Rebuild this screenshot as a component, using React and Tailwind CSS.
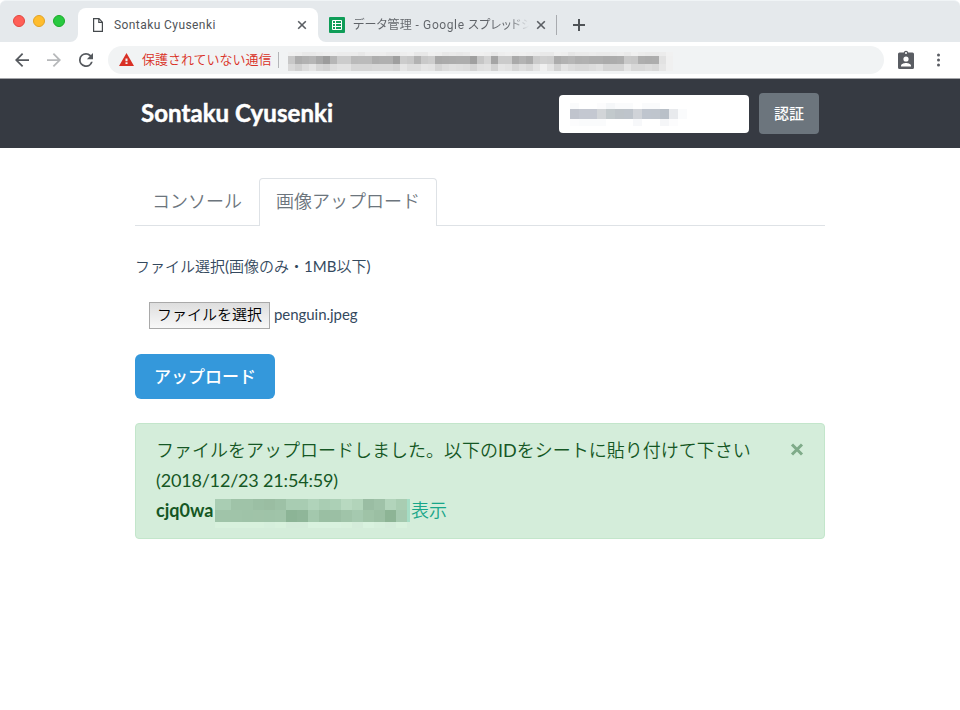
import { useState } from 'react';

const URL_ROWS = [
  {
    y: 0,
    h: 4,
    cells: 'f0 ee e9 e9 ec ee ee ec ec ec e8 ee ee ee ea ea ee f0 e8 e8 f0 ee e8 ea e8 ea f0 f0 ee e8 ee f0 ee f0 ee ec e9 e9 f0 ee e6 ea ea ec ea ea ec ee ea f0 ec ea ea ec f1',
  },
  {
    y: 4,
    h: 8,
    cells: 'c8 ad b2 b6 a9 9c b6 cc cc ba bb bb ae b0 b0 9f cc c8 b2 c9 cd a9 ab ac ad ad a0 c6 d4 a5 cb cb aa b3 ab cb d0 ce ac b2 b6 b0 b1 ae ae ab ac ae c9 c7 ae ac ad e2 f0',
  },
  {
    y: 12,
    h: 7,
    cells: 'd9 d0 dc e4 d6 d2 dd e2 e2 d6 d6 d6 d8 d8 d8 d4 e5 dd dd e5 e3 d4 dc e0 de dc d4 e0 e2 d2 e5 e2 d6 de d8 e4 f0 e4 d2 e3 dc d8 d8 dc e0 d4 d4 d4 e4 d8 d8 dc d8 e6 f0',
  },
];

const INPUT_ROWS = [
  { y: 0, h: 6, cells: 'fafbfc ffffff ffffff fcfcfd f5f7f9 fafbfc fafbfc ffffff fafbfc fafbfc ffffff ffffff ffffff' },
  { y: 6, h: 10, cells: 'c0c4cd c4c8d1 c4c8d1 d2d5d8 c2c9cc bec4c9 bec4cb d0d3d8 bfc5ce bfc5cd b9c0c8 e8eaed fafbfc' },
  { y: 16, h: 7, cells: 'fcfcfd fafbfc fafbfc fafbfc ffffff ffffff ffffff f7f8fa ffffff ffffff f5f6f8 fcfcfd ffffff' },
];

const ID_ROWS = [
  {
    y: 0,
    h: 11.3,
    cells: 'a9cdb3 a9cdb3 9fc3a8 9fc3a8 9bbfa4 9abda2 9dc1a6 a8ccb2 a8ccb2 b0d3ba a9cdb3 acd0b6 b8d9c0 b2d4ba 9abda3 9fc2a8 b2d4bb a9cdb2 a5ddc5',
  },
  {
    y: 11.3,
    h: 11.4,
    cells: '9fc4a9 a0c4a9 a0c4a9 9fc3a8 a0c3a8 9fc3a8 a0c4a9 8cb496 8fb699 a3c8ad 9abfa3 9bbfa4 a0c4a9 a5c9af 9fc3a7 9bbfa3 8db495 a5c9af a5ddc5',
  },
  {
    y: 22.7,
    h: 6,
    cells: 'd8f1dd d8f1dd d8f1dd d8f1dd d8f1dd d6efdc d8f1dd d4ecda d4ecda d9f2df d9f2df d9f2df d8f1dd d4ecda d9f2df d6efdc d4ecda d8f1dd d4edda',
  },
];

const toColor = (c) => (c.length === 2 ? `#${c}${c}${c}` : `#${c}`);

// pixelated strip over private text, first is the width of the leading cell
const Mosaic = ({ rows, size, first = size, width, height, className }) => (
  <svg width={width} height={height} className={className} shapeRendering="crispEdges">
    {rows.map((row) =>
      row.cells.split(' ').map((c, i) => (
        <rect
          key={`${row.y}-${i}`}
          x={i === 0 ? 0 : first + (i - 1) * size}
          y={row.y}
          width={i === 0 ? first : size}
          height={row.h}
          fill={toColor(c)}
        />
      ))
    )}
  </svg>
);

const CloseIcon = () => (
  <svg width="10" height="10" viewBox="0 0 10 10" className="shrink-0">
    <path d="M1.2 1.2l7.6 7.6M8.8 1.2L1.2 8.8" stroke="#5a5e63" strokeWidth="1.6" />
  </svg>
);

const TabStrip = () => (
  <div className="flex h-[42px] rounded-t-md border-t border-[#f0f4f6] bg-[#e5e9ec] pt-[7px]">
    <div className="flex w-[78px] gap-2 pl-[13px] pt-[7px]">
      <span className="size-3 rounded-full border border-[#e2463f] bg-[#ff5f57]" />
      <span className="size-3 rounded-full border border-[#e1a325] bg-[#ffbd2e]" />
      <span className="size-3 rounded-full border border-[#1aab29] bg-[#28c940]" />
    </div>
    <div className="relative flex h-[34px] w-[240px] items-center rounded-t-lg bg-white pl-[15px] pr-[11px]">
      <svg width="8" height="8" className="absolute -left-2 bottom-0">
        <path d="M8 0v8H0a8 8 0 0 0 8-8z" fill="#fff" />
      </svg>
      <svg width="8" height="8" className="absolute -right-2 bottom-0">
        <path d="M0 0v8h8a8 8 0 0 1-8-8z" fill="#fff" />
      </svg>
      <svg width="10" height="14" viewBox="0 0 10 14" className="shrink-0">
        <path d="M.6.6h5.4l3.4 3.6v9.2H.6zM5.8.6v3.8h3.6" fill="none" stroke="#45494d" strokeWidth="1.2" />
      </svg>
      <span className="ml-[11px] flex-1 whitespace-nowrap text-[12px] tracking-[0.42px] text-[#505458]">
        Sontaku Cyusenki
      </span>
      <CloseIcon />
    </div>
    <div className="flex h-[34px] items-center pl-[11px]">
      <svg width="16" height="16" viewBox="0 0 16 16" className="shrink-0">
        <rect width="16" height="16" rx="1" fill="#0f9d58" />
        <path d="M3.5 3.5h9v9h-9zM3.5 6.5h9M3.5 9.5h9M6.5 3.5v9" fill="none" stroke="#fff" strokeWidth="1" />
      </svg>
      <span className="ml-2 w-[176px] whitespace-nowrap bg-linear-to-r from-[#5f6368] from-88% to-transparent bg-clip-text text-[12px] tracking-[0.3px] text-transparent [font-feature-settings:'palt']">
        データ管理<span className="tracking-[0.6px]"> - Google </span>スプレッドシ
      </span>
      <span className="ml-[7px] flex">
        <CloseIcon />
      </span>
      <span className="ml-[10px] h-5 w-px bg-[#a8abaf]" />
      <svg width="12" height="12" className="ml-4">
        <path d="M6 0v12M0 6h12" stroke="#4f5357" strokeWidth="2" />
      </svg>
    </div>
  </div>
);

const AddressBar = () => (
  <div className="flex h-[37px] items-center border-b border-[#a3a4a8] bg-white">
    <svg width="14" height="14" viewBox="4 4 16 16" className="ml-[15px]">
      <path d="M20 11H7.83l5.59-5.59L12 4l-8 8 8 8 1.41-1.41L7.83 13H20z" fill="#55595e" />
    </svg>
    <svg width="14" height="14" viewBox="4 4 16 16" className="ml-[18px]">
      <path d="M12 4l-1.41 1.41L16.17 11H4v2h12.17l-5.58 5.59L12 20l8-8z" fill="#b6b8ba" />
    </svg>
    <svg width="14" height="14" viewBox="4 4 16 16" className="ml-[18px]">
      <path
        d="M17.65 6.35A7.96 7.96 0 0 0 12 4a8 8 0 1 0 7.73 10h-2.08A6 6 0 1 1 12 6c1.66 0 3.14.69 4.22 1.78L13 11h7V4z"
        fill="#55595e"
      />
    </svg>
    <div className="ml-[15px] flex h-7 w-[776px] items-center rounded-full bg-[#f1f3f4] pl-[11px]">
      <svg width="15" height="13" viewBox="1 2 22 19" preserveAspectRatio="none" className="-mt-px">
        <path d="M1 21h22L12 2zm12.5-3h-3v-2.500h3zm0-4h-3v-4h3z" fill="#d93025" />
      </svg>
      <span className="ml-2 w-[130px] whitespace-nowrap text-[13px] font-[350] text-[#d93025]">
        保護されていない通信
      </span>
      <span className="ml-[6px] h-4 w-px bg-[#b4b6b9]" />
      <Mosaic rows={URL_ROWS} size={7} width={385} height={19} className="ml-[9px] mt-[3px]" />
    </div>
    <svg width="16" height="19" viewBox="0 0 16 19" className="ml-[14px] -mt-[2px]">
      <path
        d="M1.5 2.5h4.200a2.400 2.400 0 0 1 4.600 0h4.200A1.500 1.500 0 0 1 16 4v13.500a1.500 1.500 0 0 1-1.500 1.500h-13A1.500 1.500 0 0 1 0 17.500V4a1.500 1.500 0 0 1 1.500-1.500z"
        fill="#5a5d63"
      />
      <circle cx="8" cy="3" r="1" fill="#fff" />
      <circle cx="8" cy="9" r="2.600" fill="#fff" />
      <path d="M3 16.500v-1c0-1.700 3.300-2.600 5-2.600s5 .9 5 2.600v1z" fill="#fff" />
    </svg>
    <svg width="4" height="14" className="ml-[22px]">
      <circle cx="2.500" cy="2" r="1.500" fill="#5a5d63" />
      <circle cx="2.500" cy="7" r="1.500" fill="#5a5d63" />
      <circle cx="2.500" cy="12" r="1.500" fill="#5a5d63" />
    </svg>
  </div>
);

const Navbar = () => (
  <nav className="h-[69px] bg-[#363a42]">
    <div className="mx-auto flex h-full w-[690px] items-center pl-[6px] pr-[6px]">
      <h1 className="flex-1 pb-[2px] text-[24px] font-bold tracking-[0.06px] text-white [-webkit-text-stroke:0.5px_#fff]">
        Sontaku Cyusenki
      </h1>
      <div className="mr-[10px] flex h-[38px] w-[190px] items-center rounded bg-white pl-[11px]">
        <Mosaic rows={INPUT_ROWS} size={9} width={117} height={23} className="mt-[2px]" />
      </div>
      <button className="h-[41px] w-[60px] rounded bg-[#6c757d] text-[15px] font-medium text-white">認証</button>
    </div>
  </nav>
);

const App = () => {
  const [tab, setTab] = useState('upload');
  const [showAlert, setShowAlert] = useState(true);

  const tabClass = (name) =>
    name === tab
      ? 'h-12 rounded-t border border-b-0 border-[#dee2e6] bg-white px-4 pb-[2px] -mb-px'
      : 'h-12 px-[17px] pb-px -mb-px';

  return (
    <div className="h-[710px] overflow-hidden bg-white font-['Roboto','Noto_Sans_CJK_JP',sans-serif]">
      <TabStrip />
      <AddressBar />
      <div className="font-['Lato','Noto_Sans_CJK_JP',sans-serif] text-[#34495e]">
        <Navbar />
        <main className="mx-auto w-[690px] pt-[30px]">
          <div className="flex border-b border-[#dee2e6] text-[18px] font-[350] text-[#6c757d]">
            <button className={tabClass('console')} onClick={() => setTab('console')}>
              コンソール
            </button>
            <button className={tabClass('upload')} onClick={() => setTab('upload')}>
              画像アップロード
            </button>
          </div>

          <p className="mt-[29px] text-[15px] leading-[22px]">
            <span className="font-[350]">ファイル選択</span>(<span className="font-[350]">画像のみ・</span>1MB
            <span className="font-[350]">以下</span>)
          </p>

          <div className="ml-[14px] mt-[25px] flex items-center text-[15px]">
            <button className="h-[27px] w-[121px] whitespace-nowrap border border-[#a9a9a9] bg-linear-to-b from-[#dedede] to-[#f8f8f8] pb-[3px] font-[350] leading-[22px] text-black">
              ファイルを選択
            </button>
            <span className="ml-1 pb-[2px] tracking-[-0.05px]">penguin.jpeg</span>
          </div>

          <button className="mt-[25px] block h-[45px] w-[140px] rounded-md bg-[#3498db] text-[17px] font-medium text-white">
            アップロード
          </button>

          {showAlert && (
            <div className="mt-6 flex h-[116px] items-start justify-between rounded border border-[#c3e6cb] bg-[#d4edda] pl-5 pr-5 pt-[11px] text-[18px] leading-[30px] text-[#155724]">
              <div className="whitespace-nowrap">
                <div>
                  <span className="font-[350]">ファイルをアップロードしました。以下の</span>ID
                  <span className="font-[350]">をシートに貼り付けて下さい</span>
                </div>
                <div className="tracking-[-0.18px]">(2018/12/23 21:54:59)</div>
                <div className="flex">
                  <b className="w-[59px]">cjq0wa</b>
                  <Mosaic rows={ID_ROWS} size={11} first={5.3} width={195} height={29} className="mt-1" />
                  <a href="#" className="ml-px font-[350] text-[#18a689]">
                    表示
                  </a>
                </div>
              </div>
              <button className="mt-2" onClick={() => setShowAlert(false)}>
                <svg width="14" height="13" viewBox="0 0 14 13">
                  <path d="M2 1.500l10 10M12 1.500l-10 10" stroke="#7fab89" strokeWidth="3" />
                </svg>
              </button>
            </div>
          )}
        </main>
      </div>
    </div>
  );
};

export default App;
